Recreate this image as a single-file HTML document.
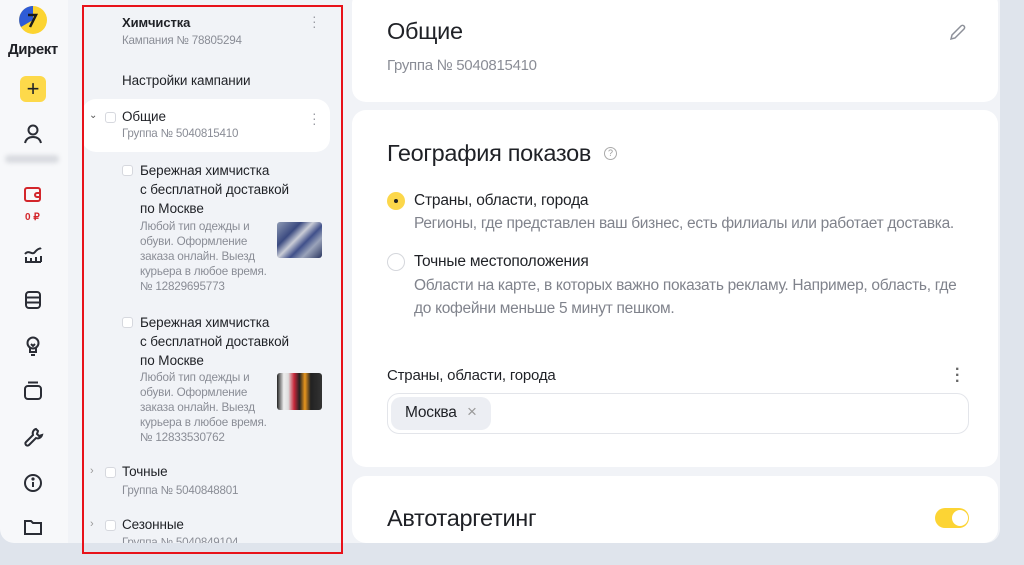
<!DOCTYPE html>
<html><head><meta charset="utf-8"><style>
*{margin:0;padding:0;box-sizing:border-box}
body{width:1024px;height:565px;overflow:hidden;background:#dfe4ec;font-family:"Liberation Sans","Noto Sans CJK SC",sans-serif;color:#1f2126;position:relative}
.a{position:absolute;white-space:nowrap}
.rail{position:absolute;left:0;top:0;width:68px;height:543px;background:#f7f8fa;border-radius:0 0 0 14px}
.mid{position:absolute;left:68px;top:0;width:932px;height:543px;background:#f1f3f7;border-radius:0 0 14px 0}
.card{position:absolute;left:352px;width:646px;background:#fff;border-radius:14px}
.t13{font-size:13px;letter-spacing:-0.1px}
.t14{font-size:13.5px;letter-spacing:-0.1px}
.g11{font-size:11.6px;color:#8a8d96;letter-spacing:-0.2px}
.g12{font-size:11.7px;color:#8a8d96;letter-spacing:-0.2px}
.cb{position:absolute;width:11px;height:11px;border:1px solid #d6d8de;border-radius:3px;background:#fff}
.ic{position:absolute;left:22px}
.h{font-size:23.5px;font-weight:500;letter-spacing:-0.3px}
.b14{font-size:15.5px;letter-spacing:-0.2px}
.g14{font-size:15.5px;color:#80838c;letter-spacing:-0.3px}
</style></head><body>
<div class="rail"></div>
<div class="mid"></div>

<svg class="a" style="left:19px;top:6px" width="28" height="28" viewBox="0 0 28 28"><circle cx="14" cy="14" r="14" fill="#fcd431"/><path d="M14 0A14 14 0 0 0 2 21L14 14Z" fill="#2e5bd6"/><path d="M9 9h8l-6 12" stroke="#1a1a1a" stroke-width="2.5" fill="none"/></svg>
<div class="a" style="left:8px;top:41px;font-size:15px;font-weight:700;letter-spacing:-0.4px">Директ</div>
<div class="a" style="left:20px;top:76px;width:26px;height:26px;background:#fdd94a;border-radius:6px;text-align:center;font-size:22px;line-height:25px">+</div>
<svg class="ic" style="top:123px" width="22" height="22" viewBox="0 0 22 22" fill="none" stroke="#2a2d35" stroke-width="2"><circle cx="11" cy="7" r="4.5"/><path d="M3 20c1-4 4-6 8-6s7 2 8 6"/></svg>
<div class="a" style="left:5px;top:155px;width:54px;height:8px;background:#d9dbe0;border-radius:4px;filter:blur(2px)"></div>
<svg class="ic" style="top:184px" width="22" height="20" viewBox="0 0 22 20" fill="none" stroke="#d3262b" stroke-width="2"><rect x="3" y="4" width="15" height="13" rx="2"/><path d="M18 9h-3a2 2 0 0 0 0 4h3"/></svg>
<div class="a" style="left:25px;top:212px;font-size:10px;font-weight:700;color:#d3262b">0 ₽</div>
<svg class="ic" style="top:245px" width="22" height="20" viewBox="0 0 22 20" fill="none" stroke="#2a2d35" stroke-width="2"><path d="M3 9c4-5 7 2 10-2s5-3 6-4"/><path d="M3 17h16M4 12v5M9 13v4M14 12v5M19 11v6"/></svg>
<svg class="ic" style="top:290px" width="22" height="20" viewBox="0 0 22 20" fill="none" stroke="#2a2d35" stroke-width="2"><rect x="4" y="2" width="14" height="16" rx="3"/><path d="M4 7.5h14M4 12.5h14"/></svg>
<svg class="ic" style="top:335px" width="22" height="22" viewBox="0 0 22 22" fill="none" stroke="#2a2d35" stroke-width="2"><circle cx="11" cy="8" r="5.5"/><path d="M8 13v4h6v-4M9 20h4M9 9l2 2 2-2"/></svg>
<svg class="ic" style="top:380px" width="22" height="22" viewBox="0 0 22 22" fill="none" stroke="#2a2d35" stroke-width="2"><rect x="3" y="6" width="16" height="13" rx="3"/><path d="M6 2.5h10"/></svg>
<svg class="ic" style="top:426px" width="22" height="22" viewBox="0 0 22 22" fill="none" stroke="#2a2d35" stroke-width="2"><path d="M14 3a4.5 4.5 0 0 0-3 6l-7 7a2 2 0 0 0 3 3l7-7a4.5 4.5 0 0 0 6-3l-3 1-2-2 1-3z"/></svg>
<svg class="ic" style="top:472px" width="22" height="22" viewBox="0 0 22 22" fill="none" stroke="#2a2d35" stroke-width="2"><circle cx="11" cy="11" r="8"/><path d="M11 10v5"/><circle cx="11" cy="7" r="0.6" fill="#2a2d35"/></svg>
<svg class="ic" style="top:517px" width="22" height="20" viewBox="0 0 22 20" fill="none" stroke="#2a2d35" stroke-width="2"><path d="M3 4h6l2 2h8v11H3z"/></svg>

<div class="a" style="left:82px;top:99px;width:248px;height:53px;background:#fff;border-radius:14px"></div>
<div class="a t13" style="left:122px;top:15px;font-weight:600">Химчистка</div>
<div class="a g11" style="left:122px;top:34px">Кампания № 78805294</div>
<div class="a" style="left:312px;top:14px;color:#9a9ca3;font-size:14px;line-height:5px;width:4px">·<br>·<br>·</div>
<div class="a t14" style="left:122px;top:73px">Настройки кампании</div>
<div class="a" style="left:89px;top:110px;font-size:10px;color:#555">⌄</div>
<div class="cb" style="left:105px;top:112px"></div>
<div class="a t14" style="left:122px;top:109px">Общие</div>
<div class="a g11" style="left:122px;top:127px">Группа № 5040815410</div>
<div class="a" style="left:312px;top:111px;color:#9a9ca3;font-size:14px;line-height:5px;width:4px">·<br>·<br>·</div>

<div class="cb" style="left:122px;top:165px"></div>
<div class="a t14" style="left:140px;top:161px;line-height:19px">Бережная химчистка<br>с бесплатной доставкой<br>по Москве</div>
<div class="a g12" style="left:140px;top:219px;line-height:15px">Любой тип одежды и<br>обуви. Оформление<br>заказа онлайн. Выезд<br>курьера в любое время.<br>№ 12829695773</div>
<div class="a" style="left:277px;top:222px;width:45px;height:36px;border-radius:3px;background:linear-gradient(135deg,#8f9bb5 0%,#3b4a80 30%,#c9ccd6 45%,#40508a 60%,#9aa3ba 75%,#2a3560 100%)"></div>

<div class="cb" style="left:122px;top:317px"></div>
<div class="a t14" style="left:140px;top:313px;line-height:19px">Бережная химчистка<br>с бесплатной доставкой<br>по Москве</div>
<div class="a g12" style="left:140px;top:370px;line-height:15px">Любой тип одежды и<br>обуви. Оформление<br>заказа онлайн. Выезд<br>курьера в любое время.<br>№ 12833530762</div>
<div class="a" style="left:277px;top:373px;width:45px;height:37px;border-radius:3px;background:linear-gradient(90deg,#222 0%,#eee 15%,#ddd 25%,#c8283a 38%,#222 50%,#e8961e 62%,#222 75%,#333 100%)"></div>

<div class="a" style="left:90px;top:465px;font-size:11px;color:#999">›</div>
<div class="cb" style="left:105px;top:467px"></div>
<div class="a t14" style="left:122px;top:464px">Точные</div>
<div class="a g11" style="left:122px;top:484px">Группа № 5040848801</div>
<div class="a" style="left:90px;top:518px;font-size:11px;color:#999">›</div>
<div class="cb" style="left:105px;top:520px"></div>
<div class="a t14" style="left:122px;top:517px">Сезонные</div>
<div class="a" style="left:80px;top:530px;width:270px;height:13px;overflow:hidden"><div class="g11" style="position:absolute;left:42px;top:6px">Группа № 5040849104</div></div>

<div class="a" style="left:82px;top:5px;width:261px;height:549px;border:2px solid #e8121a"></div>

<div class="card" style="top:-10px;height:112px"></div>
<div class="a h" style="left:387px;top:18px">Общие</div>
<div class="a" style="left:387px;top:57px;font-size:15px;color:#8a8d96;letter-spacing:-0.3px">Группа № 5040815410</div>
<svg class="a" style="left:948px;top:22px" width="20" height="20" viewBox="0 0 20 20" fill="none" stroke="#8d9099" stroke-width="1.5"><path d="M3 17l1-4 9-9a2 2 0 0 1 3 3l-9 9z"/></svg>

<div class="card" style="top:110px;height:357px"></div>
<div class="a h" style="left:387px;top:140px">География показов</div>
<div class="a" style="left:604px;top:147px;width:13px;height:13px;border:1px solid #aaa;border-radius:50%;font-size:9px;color:#999;text-align:center;line-height:11px">?</div>
<div class="a" style="left:387px;top:192px;width:18px;height:18px;border-radius:50%;background:#fcd74a"></div>
<div class="a" style="left:394px;top:199px;width:4px;height:4px;border-radius:50%;background:#222"></div>
<div class="a b14" style="left:414px;top:192px">Страны, области, города</div>
<div class="a g14" style="left:414px;top:215px">Регионы, где представлен ваш бизнес, есть филиалы или работает доставка.</div>
<div class="a" style="left:387px;top:253px;width:18px;height:18px;border-radius:50%;border:1px solid #d5d7dc"></div>
<div class="a b14" style="left:414px;top:253px">Точные местоположения</div>
<div class="a g14" style="left:414px;top:274px;line-height:23px">Области на карте, в которых важно показать рекламу. Например, область, где<br>до кофейни меньше 5 минут пешком.</div>
<div class="a" style="left:387px;top:367px;font-size:15px;letter-spacing:-0.2px">Страны, области, города</div>
<div class="a" style="left:955px;top:367px;color:#666;font-size:16px;line-height:6px;width:4px;font-weight:700">·<br>·<br>·</div>
<div class="a" style="left:387px;top:393px;width:582px;height:41px;border:1px solid #e3e5ea;border-radius:12px"></div>
<div class="a" style="left:391px;top:397px;width:100px;height:33px;background:#eceef3;border-radius:10px"></div>
<div class="a b14" style="left:405px;top:404px">Москва</div>
<div class="a" style="left:467px;top:402px;font-size:17px;color:#999">×</div>

<div class="card" style="top:476px;height:67px"></div>
<div class="a h" style="left:387px;top:505px">Автотаргетинг</div>
<div class="a" style="left:935px;top:508px;width:34px;height:20px;border-radius:10px;background:#fcd434"></div>
<div class="a" style="left:952px;top:510px;width:16px;height:16px;border-radius:50%;background:#fff"></div>
</body></html>
